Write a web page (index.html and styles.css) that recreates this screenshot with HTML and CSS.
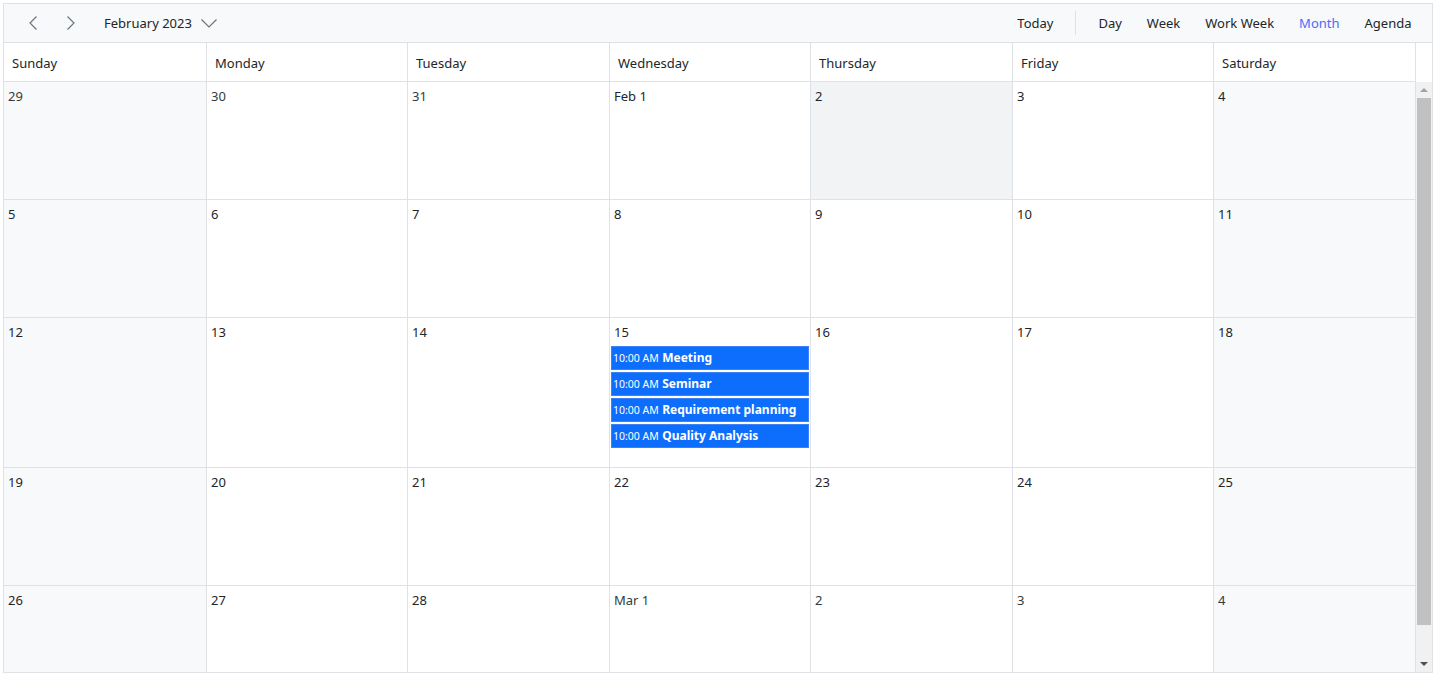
FILE: index.html
```html
<!DOCTYPE html>
<html lang="en">
<head>
    <meta charset="UTF-8">
    <title>Scheduler - Month</title>
    <link rel="stylesheet" href="styles.css">
</head>
<body>
<div class="scheduler">
    <div class="toolbar">
        <div class="toolbar-left">
            <button class="nav-btn" title="Previous">
                <svg width="10" height="14" viewBox="0 0 10 14"><path d="M8.5 0.5 L2 7 L8.5 13.5" fill="none" stroke="#6c757d" stroke-width="1.2"/></svg>
            </button>
            <button class="nav-btn" title="Next">
                <svg width="10" height="14" viewBox="0 0 10 14"><path d="M1.5 0.5 L8 7 L1.5 13.5" fill="none" stroke="#6c757d" stroke-width="1.2"/></svg>
            </button>
            <button class="date-range">
                February 2023
                <svg width="16" height="9" viewBox="0 0 16 9"><path d="M0.5 0.5 L8 8 L15.5 0.5" fill="none" stroke="#6c757d" stroke-width="1.2"/></svg>
            </button>
        </div>
        <div class="toolbar-right">
            <button class="tb-btn">Today</button>
            <span class="separator"></span>
            <button class="tb-btn">Day</button>
            <button class="tb-btn">Week</button>
            <button class="tb-btn">Work Week</button>
            <button class="tb-btn active">Month</button>
            <button class="tb-btn">Agenda</button>
        </div>
    </div>

    <div class="month-view">
        <div class="day-names">
            <div class="day-name">Sunday</div>
            <div class="day-name">Monday</div>
            <div class="day-name">Tuesday</div>
            <div class="day-name">Wednesday</div>
            <div class="day-name">Thursday</div>
            <div class="day-name">Friday</div>
            <div class="day-name">Saturday</div>
        </div>
        <div class="month-body">
            <div class="weeks" id="weeks"></div>
            <div class="scrollbar">
                <div class="sb-btn"><span class="arrow-up"></span></div>
                <div class="sb-thumb"></div>
                <div class="sb-track"></div>
                <div class="sb-btn"><span class="arrow-down"></span></div>
            </div>
        </div>
    </div>
</div>

<script>
// Feb 2023 grid, starting Sunday Jan 29
const events = {
  '2023-02-15': ['Meeting', 'Seminar', 'Requirement planning', 'Quality Analysis']
};
const months = ['Jan', 'Feb', 'Mar'];
const selected = '2023-02-02';

function pad(n) { return n < 10 ? '0' + n : '' + n; }

const weeks = document.getElementById('weeks');
let day = new Date(2023, 0, 29);

for (let w = 0; w < 5; w++) {
  const row = document.createElement('div');
  row.className = 'week';
  for (let d = 0; d < 7; d++) {
    const key = day.getFullYear() + '-' + pad(day.getMonth() + 1) + '-' + pad(day.getDate());
    const cell = document.createElement('div');
    cell.className = 'cell';
    if (d === 0 || d === 6) cell.classList.add('weekend');
    if (day.getMonth() !== 1) cell.classList.add('other-month');
    if (key === selected) cell.classList.add('selected');

    let label = day.getDate();
    if (day.getDate() === 1) label = months[day.getMonth()] + ' 1';

    let html = '<div class="date">' + label + '</div>';
    if (events[key]) {
      html += '<div class="appointments">';
      events[key].forEach(function (title) {
        html += '<div class="appointment"><span class="time">10:00 AM</span> <span class="subject">' + title + '</span></div>';
      });
      html += '</div>';
      cell.classList.add('has-events');
    }
    cell.innerHTML = html;
    row.appendChild(cell);
    day.setDate(day.getDate() + 1);
  }
  weeks.appendChild(row);
}
</script>
</body>
</html>
```

FILE: styles.css
```css
body {
    margin: 0;
    font-family: "Noto Sans", "Open Sans", sans-serif;
    color: #212529;
    background: #fff;
}
button {
    font-family: inherit;
    background: none;
    border: none;
    cursor: pointer;
    color: #212529;
    padding: 0;
}
.scheduler {
    margin: 3px;
    width: 1428px;
    height: 668px;
    border: 1px solid #dee2e6;
    display: flex;
    flex-direction: column;
    overflow: hidden;
}

/* toolbar */
.toolbar {
    height: 38px;
    flex: none;
    background: #f8f9fa;
    border-bottom: 1px solid #dee2e6;
    display: flex;
    align-items: center;
    justify-content: space-between;
}
.toolbar-left {
    display: flex;
    align-items: center;
    padding-left: 13px;
}
.nav-btn {
    width: 32px;
    height: 32px;
    margin-right: 6px;
    display: flex;
    align-items: center;
    justify-content: center;
}
.date-range {
    display: flex;
    align-items: center;
    gap: 9px;
    font-size: 13px;
    margin-left: 11px;
    height: 32px;
}
.toolbar-right {
    display: flex;
    align-items: center;
    padding-right: 8px;
}
.tb-btn {
    font-size: 13px;
    height: 32px;
    padding: 0 12.5px;
}
.tb-btn.active {
    color: #4b6cf7;
}
.separator {
    width: 1px;
    height: 24px;
    background: #dee2e6;
    margin: 0 10px 0 9px;
}

/* month grid: column widths share 1412px */
.day-names,
.week {
    display: grid;
    grid-template-columns: 203px 201px 202px 201px 202px 201px 202px;
}
.month-view {
    flex: 1;
    display: flex;
    flex-direction: column;
    min-height: 0;
}
.day-names {
    flex: none;
}
.day-name {
    height: 36px;
    line-height: 36px;
    padding: 2px 0 0 8px;
    font-size: 13px;
    border-right: 1px solid #dee2e6;
    border-bottom: 1px solid #dee2e6;
}
.month-body {
    flex: 1;
    display: flex;
    min-height: 0;
}
.weeks {
    flex: 1;
    overflow: hidden;
}
.cell {
    min-height: 117px;
    border-right: 1px solid #dee2e6;
    border-bottom: 1px solid #dee2e6;
    font-size: 13px;
}
.cell.has-events {
    padding-bottom: 19px;
}
.cell.weekend {
    background: #f8f9fa;
}
.cell.selected {
    background: #f2f3f5;
}
.date {
    height: 20px;
    line-height: 20px;
    padding: 4px;
}
.cell.other-month .date {
    color: #343a40;
}
.appointments {
    display: flex;
    flex-direction: column;
    gap: 2px;
    padding: 0 1px;
}
.appointment {
    height: 22px;
    line-height: 21px;
    background: #0d6efd;
    border: 1px solid #3b82f6;
    color: #fff;
    padding-left: 1px;
    white-space: nowrap;
    overflow: hidden;
}
.time {
    font-size: 10.5px;
}
.subject {
    font-size: 12px;
    font-weight: bold;
}

/* scrollbar */
.scrollbar {
    width: 16px;
    flex: none;
    background: #f1f1f1;
    display: flex;
    flex-direction: column;
}
.sb-btn {
    height: 16px;
    display: flex;
    align-items: center;
    justify-content: center;
}
.sb-thumb {
    height: 527px;
    margin: 0 1px;
    background: #c1c1c1;
}
.sb-track {
    flex: 1;
}
.arrow-up {
    border-left: 4px solid transparent;
    border-right: 4px solid transparent;
    border-bottom: 4px solid #a3a3a3;
}
.arrow-down {
    border-left: 4px solid transparent;
    border-right: 4px solid transparent;
    border-top: 4px solid #505050;
}
```
